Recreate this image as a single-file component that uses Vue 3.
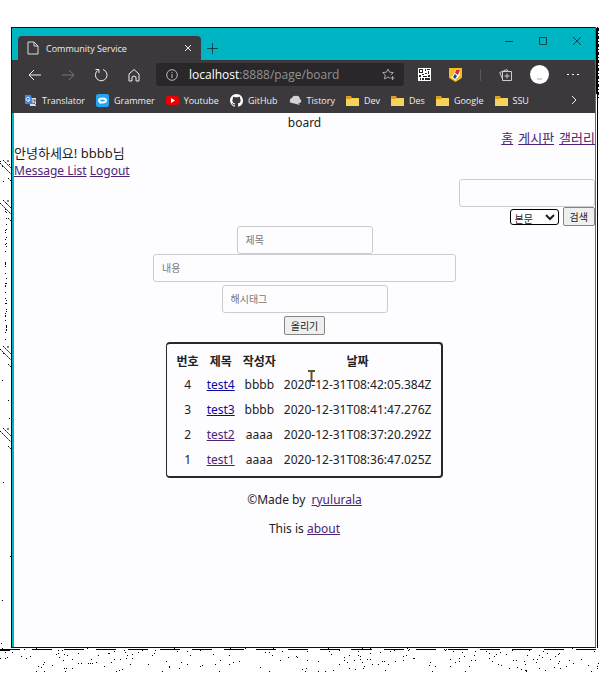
<script setup>
import { ref } from 'vue'

const search = ref('')
const field = ref('body')
const title = ref('')
const content = ref('')
const hashtag = ref('')

const posts = [
  { id: 4, title: 'test4', author: 'bbbb', date: '2020-12-31T08:42:05.384Z', visited: false },
  { id: 3, title: 'test3', author: 'bbbb', date: '2020-12-31T08:41:47.276Z', visited: false },
  { id: 2, title: 'test2', author: 'aaaa', date: '2020-12-31T08:37:20.292Z', visited: true },
  { id: 1, title: 'test1', author: 'aaaa', date: '2020-12-31T08:36:47.025Z', visited: true },
]

// Dithered shadow: a fixed pseudo-random scatter of one-pixel dots.
function scatter(count, width, height, seed) {
  let s = seed
  const next = (n) => {
    s = (s * 1103515245 + 12345) % 2147483648
    return Math.floor((s / 2147483648) * n)
  }
  let d = ''
  for (let i = 0; i < count; i++) d += `M${next(width)} ${next(height)}h1v1h-1z`
  return d
}
const floorDots = scatter(230, 600, 24, 7)
const leftDots = scatter(14, 11, 500, 31)
const columnDots = scatter(48, 2, 145, 5)
const clusters = [0, 40, 186, 268]
</script>

<template>
  <div class="desktop">
    <svg class="dither-left" aria-hidden="true">
      <g v-for="y in clusters" :key="y" :transform="`translate(0 ${y})`">
        <path class="hatch" d="M0 3L11 14M3 0L11 8M7 1h2M8 18l3 3" />
      </g>
      <path transform="translate(5 40)" :d="columnDots" />
      <path :d="leftDots" />
      <path d="M0 490h10v1H0z" />
    </svg>
    <svg class="dither-right" aria-hidden="true"><path d="M0 0h2v66H0z" /><path class="fringe" d="M2.500 0v72" /></svg>
    <div class="window">
      <header class="titlebar">
        <div class="tab">
          <svg class="doc" width="12" height="14" viewBox="0 0 12 14"><path d="M1 1h6l4 4v8H1zM7 1v4h4" /></svg>
          <span class="tab-name">Community Service</span>
          <button class="icon" aria-label="Close tab"><svg width="8" height="8" viewBox="0 0 8 8"><path d="M1 1l6 6M7 1L1 7" /></svg></button>
        </div>
        <button class="icon dark new-tab" aria-label="New tab"><svg width="11" height="11" viewBox="0 0 11 11"><path d="M5.500 0v11M0 5.500h11" /></svg></button>
        <div class="controls">
          <button class="icon dark" aria-label="Minimize"><svg width="10" height="10" viewBox="0 0 10 10"><path d="M1 5.500h8" /></svg></button>
          <button class="icon dark" aria-label="Maximize"><svg width="10" height="10" viewBox="0 0 10 10"><path d="M1.500 1.500h7v7h-7z" /></svg></button>
          <button class="icon dark" aria-label="Close"><svg width="10" height="10" viewBox="0 0 10 10"><path d="M1 1l8 8M9 1L1 9" /></svg></button>
        </div>
      </header>

      <nav class="toolbar">
        <div class="nav-buttons">
          <button class="icon" aria-label="Back"><svg width="14" height="14" viewBox="0 0 14 14"><path d="M13 7H1M6 2L1 7l5 5" /></svg></button>
          <button class="icon dim" aria-label="Forward"><svg width="14" height="14" viewBox="0 0 14 14"><path d="M1 7h12M8 2l5 5-5 5" /></svg></button>
          <button class="icon" aria-label="Reload"><svg width="14" height="14" viewBox="0 0 14 14"><path d="M9 1.500A5.800 5.800 0 1 1 4 2.200M1.500 1.500H5V5" /></svg></button>
          <button class="icon" aria-label="Home"><svg width="14" height="14" viewBox="0 0 14 14"><path d="M2 6l5-4.500L12 6v7H9V9Q7 7 5 9v4H2z" /></svg></button>
        </div>
        <div class="address">
          <svg width="12" height="12" viewBox="0 0 12 12"><circle cx="6" cy="6" r="5.300" /><path d="M6 5v4M6 3v1" /></svg>
          <span class="url"><b>localhost</b>:8888/page/board</span>
          <svg class="star" width="13" height="13" viewBox="0 0 13 13"><path d="M8 10L6 9l-3.500 2 .8-4L.7 4.600l3.700-.4L6 1l1.600 3.200 3.700.4-2.600 2.300M10.500 8v4M8.500 10h4" /></svg>
        </div>
        <div class="extensions">
          <svg width="13" height="13" viewBox="0 0 13 13"><path class="white" d="M0 0h13v13H0z" /><path class="ink" d="M1 1h4v4H1zM7 1h1v2H7zM9 1h3v1H9zM10 3h1v3h-1zM7 5h2v1H7zM1 7h2v2H1zM4 6h2v1H4zM5 8h4v1H5zM2 10h1v2H2zM4 10h2v2H4zM7 10h5v2H7zM10 7h2v2h-2z" /><path class="white" d="M2 2h2v2H2z" /></svg>
          <svg width="13" height="14" viewBox="0 0 13 14"><path class="gold" d="M0 0h13v9q0 1-1 1.500L6.500 14 1 10.500Q0 10 0 9z" /><path class="white" d="M6 2h5v5L6 12 2 9q3-1 4-7z" /><path class="red" d="M7 2h4L9 7 6 5z" /><path class="navy" d="M6 6l2 2-2 3-2-2z" /></svg>
          <i class="divider"></i>
          <svg class="stroke" width="13" height="13" viewBox="0 0 13 13"><path d="M3 10L.800 4.500 8 1.500l.8 2M3.500 3.500h9v9h-9zM8 5.500v5M5.500 8h5" /></svg>
          <svg class="avatar" width="19" height="19" viewBox="0 0 19 19"><circle class="white" cx="9.500" cy="9.500" r="9.500" /><path d="M7 14h5" /></svg>
          <button class="icon" aria-label="Menu"><svg width="12" height="4" viewBox="0 0 12 4"><path class="white" d="M0 1h2v1H0zM5 1h2v1H5zM10 1h2v1h-2z" /></svg></button>
        </div>
      </nav>

      <nav class="bookmarks">
        <a href="#"><svg width="13" height="13" viewBox="0 0 13 13"><path class="paper" d="M5 4h7v8H6z" /><path class="blue" d="M1 1h6l2 9H1z" /><path class="outline" d="M6 4.500A2 2 0 1 0 6 6H4" /><path class="grey-line" d="M8.500 6h3M10 9l2 2M11 6q0 3-2 4" /></svg>Translator</a>
        <a href="#"><svg width="13" height="13" viewBox="0 0 13 13"><rect class="sky" width="13" height="13" rx="2" /><ellipse class="outline thick" cx="6.500" cy="6.500" rx="3.500" ry="2" /><path class="outline" d="M5 8l-1 2" /></svg>Grammer</a>
        <a href="#"><svg width="13" height="13" viewBox="0 0 13 13"><rect class="yt" y="2" width="13" height="9" rx="2" /><path class="white" d="M5 4l4 2.500L5 9z" /></svg>Youtube</a>
        <a href="#"><svg width="13" height="13" viewBox="0 0 16 16"><path class="white" d="M8 0C3.580 0 0 3.580 0 8c0 3.540 2.290 6.530 5.470 7.590.4.070.55-.17.55-.38 0-.19-.01-.82-.01-1.490-2.010.37-2.530-.49-2.690-.94-.09-.23-.48-.94-.82-1.130-.28-.15-.68-.52-.01-.53.63-.01 1.080.58 1.230.82.72 1.210 1.870.87 2.330.66.07-.52.28-.87.51-1.070-1.780-.2-3.640-.89-3.640-3.950 0-.87.31-1.590.82-2.150-.08-.2-.36-1.020.08-2.120 0 0 .67-.21 2.200.82a7.600 7.600 0 0 1 4 0c1.530-1.040 2.200-.82 2.200-.82.44 1.100.16 1.920.08 2.120.51.56.82 1.270.82 2.150 0 3.070-1.870 3.750-3.650 3.950.29.25.54.73.54 1.480 0 1.070-.01 1.930-.01 2.200 0 .21.15.46.55.38A8.010 8.010 0 0 0 16 8c0-4.420-3.580-8-8-8z" /></svg>GitHub</a>
        <a href="#"><svg width="13" height="13" viewBox="0 0 13 13"><path class="cloud" d="M3 9Q0 9 1 6q0-2 2-2 1-3 4-2 3-1 4 3 2 1 1 3-1 2-3 1l2 2-4-1z" /></svg>Tistory</a>
        <a v-for="name in ['Dev', 'Des', 'Google', 'SSU']" :key="name" href="#"><svg width="13" height="13" viewBox="0 0 13 13"><path class="folder-back" d="M0 2h5l1 2h7v8H0z" /><path class="folder" d="M0 5h5l1-1h7v8H0z" /></svg>{{ name }}</a>
        <button class="icon more" aria-label="More bookmarks"><svg width="7" height="10" viewBox="0 0 7 10"><path d="M1 1l4 4-4 4" /></svg></button>
      </nav>

      <main class="page">
        <h1>board</h1>
        <nav class="menu"><a href="#">홈</a><a href="#">게시판</a><a href="#">갤러리</a></nav>
        <p class="line greeting">안녕하세요! bbbb님</p>
        <p class="line"><a href="#">Message List</a> <a href="#">Logout</a></p>

        <form class="search" @submit.prevent>
          <input v-model="search" class="box" type="text" aria-label="검색어" />
          <div class="search-row">
            <select v-model="field" aria-label="검색 대상"><option value="body">본문</option></select>
            <button class="push">검색</button>
          </div>
        </form>

        <form class="write" @submit.prevent>
          <input v-model="title" class="box title" type="text" placeholder="제목" aria-label="제목" />
          <input v-model="content" class="box content" type="text" placeholder="내용" aria-label="내용" />
          <input v-model="hashtag" class="box hashtag" type="text" placeholder="해시태그" aria-label="해시태그" />
          <button class="push">올리기</button>
        </form>

        <div class="board">
          <table>
            <thead><tr><th>번호</th><th>제목</th><th>작성자</th><th>날짜</th></tr></thead>
            <tbody>
              <tr v-for="post in posts" :key="post.id">
                <td>{{ post.id }}</td>
                <td><a href="#" :class="{ fresh: !post.visited }">{{ post.title }}</a></td>
                <td>{{ post.author }}</td>
                <td>{{ post.date }}</td>
              </tr>
            </tbody>
          </table>
          <svg class="cursor" width="7" height="12" viewBox="0 0 7 12" aria-hidden="true"><path d="M0 1h7M3.500 1v10M0 11h7" /></svg>
        </div>

        <footer>
          <p>©Made by &nbsp;<a href="#">ryulurala</a></p>
          <p>This is <a href="#">about</a></p>
        </footer>
      </main>
    </div>
    <svg class="dither-floor" aria-hidden="true"><path class="rule" d="M0 1.500h600" /><path :d="floorDots" /></svg>
  </div>
</template>

<style>
body {
  background: #fff;
}
</style>

<style scoped>
* {
  box-sizing: border-box;
}
.desktop {
  position: relative;
  display: flex;
  flex-direction: column;
  min-height: 100vh;
  padding-top: 27px;
  overflow: hidden;
  font-family: "Noto Sans", "Noto Sans CJK KR", sans-serif;
  font-size: 12px;
  color: #222;
}
.window {
  flex: 1;
  display: flex;
  flex-direction: column;
  margin: 0 4px 0 11px;
  border: 1px solid #111;
  border-right: 1px solid #4d7578;
  background: #00b5c3;
  box-shadow: 1px 0 0 #fff, 2px 0 0 #000;
}
.dither-left {
  position: absolute;
  left: 0;
  top: 160px;
  width: 11px;
  height: 500px;
}
.hatch {
  fill: none;
  stroke: #000;
  stroke-dasharray: 2 1;
}
.dither-right {
  position: absolute;
  right: 0;
  top: 28px;
  width: 4px;
  height: 80px;
}
.fringe {
  stroke: #000;
  stroke-dasharray: 3 2 1 2;
}
.dither-floor {
  display: block;
  width: 100%;
  height: 27px;
}
.rule {
  stroke: #000;
  stroke-dasharray: 20 12;
}
.icon {
  display: flex;
  align-items: center;
  justify-content: center;
  padding: 0;
  border: 0;
  background: none;
  stroke: #eee;
  fill: none;
}
.dark {
  stroke: #10464b;
}
.dim {
  stroke: #777;
}
svg {
  flex: none;
}
.titlebar {
  display: flex;
  align-items: center;
  height: 32px;
}
.tab {
  display: flex;
  align-items: center;
  align-self: flex-end;
  width: 183px;
  height: 24px;
  margin-left: 6px;
  padding: 0 9px;
  border-radius: 4px 4px 0 0;
  background: #3b393c;
  color: #eee;
  font-family: "Open Sans", sans-serif;
  font-size: 9px;
}
.doc {
  stroke: #ddd;
  fill: none;
}
.tab-name {
  flex: 1;
  margin-left: 7px;
}
.new-tab {
  margin: 8px 0 0 6px;
}
.controls {
  display: flex;
  gap: 24px;
  margin: -6px 13px 0 auto;
}
.toolbar {
  display: flex;
  align-items: center;
  height: 29px;
  background: #3b393c;
}
.nav-buttons {
  display: flex;
  gap: 19px;
  padding-left: 16px;
}
.address {
  flex: 1;
  display: flex;
  align-items: center;
  height: 23px;
  margin-left: 15px;
  padding: 0 9px 0 10px;
  border-radius: 3px;
  background: #29272a;
  color: #929292;
  font-family: "Open Sans", sans-serif;
  font-size: 12px;
  stroke: #bbb;
  fill: none;
}
.url {
  flex: 1;
  margin-left: 11px;
  stroke: none;
}
.url b {
  color: #fff;
  font-weight: 400;
}
.star {
  stroke: #aaa;
}
.extensions {
  display: flex;
  align-items: center;
  gap: 18px;
  padding: 0 16px 0 14px;
}
.divider {
  width: 1px;
  height: 12px;
  background: #59575a;
}
.stroke {
  stroke: #ccc;
  fill: none;
}
.avatar {
  stroke: #aaa;
}
.bookmarks {
  display: flex;
  align-items: center;
  gap: 11px;
  height: 24px;
  padding: 0 0 2px 12px;
  background: #3b393c;
  font-family: "Open Sans", sans-serif;
  font-size: 9px;
}
.bookmarks a {
  display: flex;
  align-items: center;
  gap: 5px;
  color: #eee;
  text-decoration: none;
}
.more {
  margin: 0 17px 0 auto;
}
.white { fill: #fff; stroke: none; }
.ink { fill: #29272a; }
.gold { fill: #f8bd19; }
.red { fill: #de2930; }
.navy { fill: #18459a; }
.paper { fill: #ddd; }
.blue { fill: #4285e8; }
.sky { fill: #23a5ef; }
.yt { fill: #e90000; }
.cloud { fill: #d4d2d5; }
.folder-back { fill: #d99f22; }
.folder { fill: #f5d25b; }
.outline { fill: none; stroke: #fff; }
.grey-line { fill: none; stroke: #667; }
.thick { stroke-width: 2; }
.page {
  flex: 1;
  margin-left: 2px;
  background: #fdfcff;
}
.page a {
  color: #4d2475;
}
.page a.fresh {
  color: #0909a5;
}
h1 {
  margin: 0;
  padding-top: 1px;
  font-size: 12px;
  font-weight: 400;
  line-height: 18px;
  text-align: center;
}
.menu {
  display: flex;
  justify-content: flex-end;
  gap: 5px;
  font-size: 13px;
  line-height: 13px;
}
.line {
  margin: 0;
  line-height: 17px;
}
.greeting {
  font-size: 13px;
}
.search {
  display: flex;
  flex-direction: column;
  align-items: flex-end;
}
.box {
  height: 28px;
  padding: 0 8px;
  border: 1px solid #ccc;
  border-radius: 3px;
  background: #fdfcff;
  font: inherit;
  font-size: 10px;
}
.box::placeholder {
  color: #777;
}
.search .box {
  width: 136px;
}
.search-row {
  display: flex;
  align-items: center;
  gap: 4px;
}
select {
  width: 49px;
  height: 16px;
  padding: 0;
  border: 1px solid #000;
  border-radius: 3px;
  background: #fff;
  color: #222;
  font-family: "Noto Sans CJK KR", sans-serif;
  font-size: 10px;
}
.push {
  height: 19px;
  padding: 0 6px;
  border: 1px solid #858585;
  border-radius: 2px;
  background: #efeff0;
  color: #222;
  font: inherit;
  font-size: 10px;
  line-height: 16px;
}
.write {
  display: flex;
  flex-direction: column;
  align-items: center;
}
.title {
  width: 136px;
}
.content {
  width: 303px;
}
.hashtag {
  width: 166px;
  margin: 3px 0;
}
.board {
  position: relative;
  width: fit-content;
  margin: 7px auto 0;
  padding: 6px 6px 4px;
  border: 2px solid #28272b;
  border-left-width: 1px;
  border-radius: 4px;
}
table {
  border-collapse: collapse;
}
th,
td {
  height: 25px;
  padding: 0 4px;
  font-size: 12px;
  text-align: center;
}
thead th {
  height: 22px;
}
.cursor {
  position: absolute;
  left: 141px;
  top: 26px;
  stroke: #66512c;
  stroke-width: 2;
}
footer {
  padding-top: 13px;
  text-align: center;
}
footer p {
  margin: 0 0 11px;
  line-height: 18px;
}
</style>
